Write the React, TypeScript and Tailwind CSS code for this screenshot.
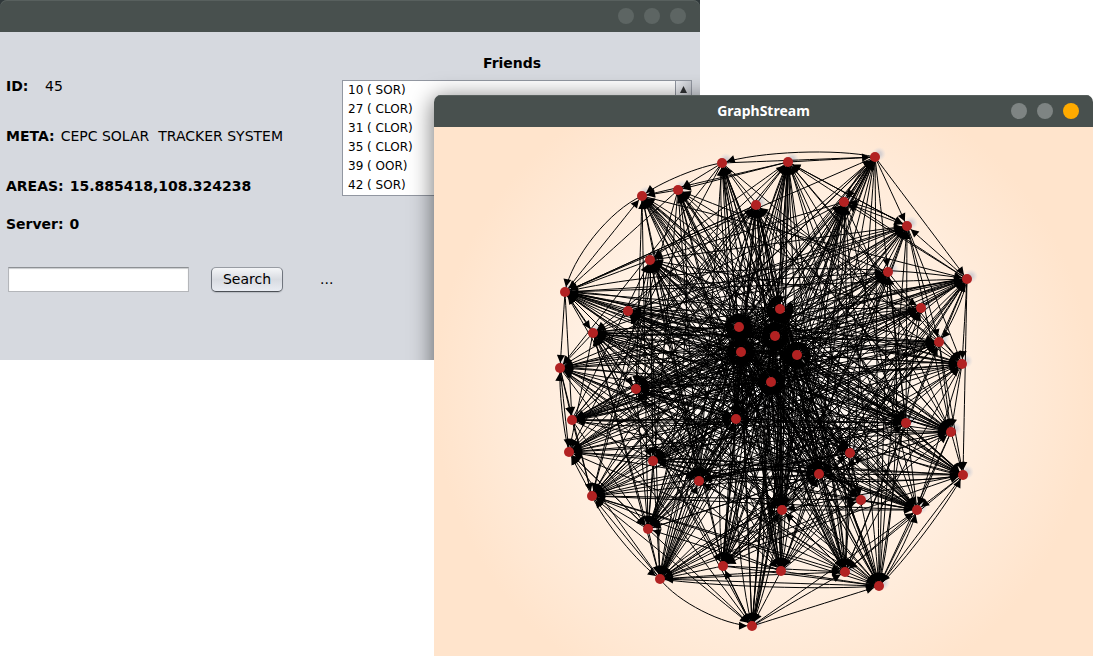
import React from "react";

type Point = [number, number];

const HUBS: Point[] = [
  [780, 309], [739, 327], [775, 336], [741, 352], [797, 355], [771, 382],
];

// x, y, share of links this node keeps
const OUTER: [number, number, number][] = [
  [722, 163, 0.7], [788, 162, 0.75], [875, 157, 0.7], [678, 190, 0.5], [642, 196, 0.6],
  [756, 205, 0.75], [844, 202, 0.6], [907, 226, 0.6], [650, 260, 0.7], [888, 272, 0.7],
  [967, 279, 0.6], [565, 292, 0.6], [628, 311, 0.5], [593, 333, 0.7], [921, 308, 0.5],
  [939, 342, 0.55], [962, 364, 0.6], [560, 368, 0.65], [636, 389, 0.75], [572, 420, 0.55],
  [736, 419, 0.85], [569, 452, 0.55], [906, 423, 0.75], [951, 432, 0.65], [850, 453, 0.5],
  [653, 461, 0.65], [699, 481, 0.85], [819, 474, 0.85], [963, 475, 0.5], [592, 496, 0.65],
  [861, 500, 0.5], [782, 510, 0.85], [917, 510, 0.7], [648, 529, 0.65], [660, 579, 0.85],
  [723, 566, 0.75], [781, 571, 0.75], [845, 572, 0.65], [879, 586, 0.75], [752, 626, 0.35],
];

const NODES: Point[] = [...OUTER.map(([x, y]): Point => [x, y]), ...HUBS];
const CENTER: Point = [765, 380];

// Links along the rim: from, to, outward bend
const RIM: [number, number, number][] = [
  [2, 10, 0], [4, 11, 0.1], [11, 4, 0], [10, 28, 0], [2, 0, 0.05], [0, 3, 0], [1, 3, 0],
  [1, 4, 0], [0, 2, 0], [1, 2, 0], [0, 4, 0.05], [8, 11, 0], [3, 11, 0], [5, 11, 0],
  [1, 7, 0], [10, 7, 0], [2, 7, 0], [10, 6, 0], [6, 7, 0], [7, 6, 0.05], [3, 4, 0],
  [7, 1, 0], [10, 1, 0], [2, 9, 0], [2, 6, 0], [6, 2, 0.06], [9, 7, 0], [14, 10, 0],
  [15, 10, 0], [10, 15, 0.05], [7, 15, 0], [7, 16, 0], [9, 16, 0], [7, 23, 0],
  [11, 17, 0], [11, 19, 0], [17, 21, 0], [21, 17, 0.03], [29, 21, 0], [19, 29, 0],
  [11, 13, 0], [13, 17, 0], [12, 11, 0], [13, 21, 0], [17, 29, 0], [17, 19, 0],
  [34, 29, 0], [29, 34, 0.05], [34, 21, 0], [34, 39, 0.09], [39, 35, 0], [29, 39, 0],
  [33, 29, 0], [33, 34, 0], [25, 34, 0], [33, 21, 0], [19, 33, 0], [21, 33, 0],
  [39, 38, 0], [38, 28, 0.03], [28, 38, 0], [32, 38, 0], [28, 32, 0], [38, 34, 0],
  [39, 32, 0], [39, 37, 0], [15, 28, 0], [23, 28, 0], [16, 23, 0], [10, 16, 0],
  [36, 39, 0], [33, 39, 0], [34, 37, 0], [34, 38, 0.02], [35, 37, 0], [35, 38, 0],
  [36, 38, 0], [32, 37, 0], [38, 32, 0.04], [28, 37, 0], [23, 38, 0], [22, 28, 0],
  [30, 32, 0], [16, 32, 0], [23, 32, 0], [15, 23, 0], [36, 34, 0], [35, 34, 0],
];

function noise(a: number, b: number): number {
  const v = Math.sin(a * 127.1 + b * 311.7 + 17.3) * 43758.5453;
  return v - Math.floor(v);
}

const lines: string[] = [];
const heads: string[] = [];

function link(from: number, to: number, bend: number) {
  const [ax, ay] = NODES[from];
  const [bx, by] = NODES[to];
  const dx = bx - ax;
  const dy = by - ay;
  const len = Math.hypot(dx, dy);
  let nx = -dy / len;
  let ny = dx / len;
  const mx = (ax + bx) / 2;
  const my = (ay + by) / 2;
  if (nx * (mx - CENTER[0]) + ny * (my - CENTER[1]) < 0) {
    nx = -nx;
    ny = -ny;
  }
  const off = len * bend * 1.33;
  const c1 = [ax + dx * 0.25 + nx * off, ay + dy * 0.25 + ny * off];
  const c2 = [ax + dx * 0.75 + nx * off, ay + dy * 0.75 + ny * off];
  const tx = bx - c2[0];
  const ty = by - c2[1];
  const tl = Math.hypot(tx, ty);
  const ux = tx / tl;
  const uy = ty / tl;
  const tip = [bx - ux * 5, by - uy * 5];
  const base = [bx - ux * 13, by - uy * 13];
  lines.push(
    `M${ax} ${ay}C${c1[0].toFixed(1)} ${c1[1].toFixed(1)} ${c2[0].toFixed(1)} ${c2[1].toFixed(1)} ${bx} ${by}`
  );
  heads.push(
    `M${tip[0].toFixed(1)} ${tip[1].toFixed(1)}L${(base[0] - uy * 4).toFixed(1)} ${(base[1] + ux * 4).toFixed(1)}L${(base[0] + uy * 4).toFixed(1)} ${(base[1] - ux * 4).toFixed(1)}Z`
  );
}

RIM.forEach(([a, b, bend]) => link(a, b, bend));

for (let i = 0; i < NODES.length; i++) {
  for (let j = i + 1; j < NODES.length; j++) {
    const hub = j >= OUTER.length;
    if (!hub) {
      const [ax, ay, wa] = OUTER[i];
      const [bx, by, wb] = OUTER[j];
      // Chords close to the rim are listed in RIM
      const mid = Math.hypot((ax + bx) / 2 - CENTER[0], ((ay + by) / 2 - CENTER[1]) * 0.88);
      if (mid > 160) continue;
      if (noise(i, j) > wa * wb * 1.1) continue;
    }
    const kind = noise(j, i);
    const bend = noise(i + 50, j) > 0.5 ? -0.06 : 0.04;
    const forward = hub ? kind < 0.65 : kind < 0.6;
    const back = hub ? kind > 0.25 : kind > 0.45;
    if (forward) link(i, j, 0);
    if (back) link(j, i, forward ? bend : 0);
  }
}

const LINE_PATH = lines.join("");
const HEAD_PATH = heads.join("");

function Graph() {
  return (
    <svg viewBox="434 127 659 529" className="block h-full w-full" role="img" aria-label="GraphStream">
      <defs>
        <radialGradient id="node-shadow">
          <stop offset="0.3" stopColor="#c4c4cc" stopOpacity="0.7" />
          <stop offset="1" stopColor="#d8d8e0" stopOpacity="0" />
        </radialGradient>
      </defs>
      {NODES.map(([x, y]) => (
        <circle key={`s${x}-${y}`} cx={x + 4} cy={y - 3} r="7" fill="url(#node-shadow)" />
      ))}
      <path d={LINE_PATH} fill="none" stroke="#000" strokeWidth="1" />
      <path d={HEAD_PATH} fill="#000" />
      {NODES.map(([x, y]) => (
        <circle key={`n${x}-${y}`} cx={x} cy={y} r="5" fill="#b22222" />
      ))}
    </svg>
  );
}

const FRIENDS = ["10 ( SOR)", "27 ( CLOR)", "31 ( CLOR)", "35 ( CLOR)", "39 ( OOR)", "42 ( SOR)"];

function Controls({ colors }: { colors: string[] }) {
  return (
    <div className="flex gap-[10px]">
      {["Minimize", "Maximize", "Close"].map((name, i) => (
        <button key={name} type="button" aria-label={name} className={`size-4 rounded-full ${colors[i]}`} />
      ))}
    </div>
  );
}

function DeviceWindow() {
  return (
    <section className="relative w-[700px] max-w-full overflow-hidden bg-[#d6d9df] text-sm leading-5 text-black">
      <div className="bg-[#30383a]">
        <header className="flex h-8 items-center justify-end rounded-t-[7px] bg-[#48504e] pr-[14px] shadow-[inset_0_1px_0_#58605e]">
          <Controls colors={["bg-[#5d6563]", "bg-[#5d6563]", "bg-[#5d6563]"]} />
        </header>
      </div>
      <div className="flex pb-[68px]">
        <div className="w-[342px] shrink-0 pl-[6px] pt-11">
          <dl>
            <div className="flex">
              <dt className="w-[39px] font-bold">ID:</dt>
              <dd>45</dd>
            </div>
            <div className="mt-[30px] flex gap-[6px]">
              <dt className="font-bold">META:</dt>
              <dd className="whitespace-pre">CEPC SOLAR  TRACKER SYSTEM</dd>
            </div>
            <div className="mt-[30px] flex gap-[6px] font-bold">
              <dt>AREAS:</dt>
              <dd>15.885418,108.324238</dd>
            </div>
            <div className="mt-[18px] flex gap-[6px] font-bold">
              <dt>Server:</dt>
              <dd>0</dd>
            </div>
          </dl>
          <form className="ml-[2px] mt-[33px] flex items-center" onSubmit={(e) => e.preventDefault()}>
            <input
              type="text"
              aria-label="Search"
              className="h-[25px] w-[181px] border border-[#b4b6ba] border-t-[#8d9094] bg-white px-1 shadow-[inset_0_1px_1px_#c9cbce] outline-none"
            />
            <button
              type="submit"
              className="ml-[22px] h-[25px] w-[72px] rounded-[5px] border border-[#70757e] border-b-[#4c5056] border-t-[#989ca3] bg-linear-to-b from-[#f5f6f8] via-[#d8dbe1] to-[#e9ecf2] pb-[2px] leading-none shadow-[0_1px_1px_#b9bcc2]"
            >
              Search
            </button>
            <span className="ml-[37px] pb-[2px]">...</span>
          </form>
        </div>
        <div className="min-w-0 flex-1 pr-2 pt-[21px]">
          <label htmlFor="friends" className="block pl-[141px] font-bold">
            Friends
          </label>
          <div className="mt-[7px] flex border border-[#9297a1] bg-white">
            <select
              id="friends"
              size={6}
              className="h-[114px] min-w-0 flex-1 overflow-hidden bg-white pl-[3px] text-xs outline-none"
            >
              {FRIENDS.map((name) => (
                <option key={name} className="h-[19px] px-[2px] pb-0 pt-[2px]">
                  {name}
                </option>
              ))}
            </select>
            <div className="w-4 border-l border-[#9297a1] bg-[#d0d3d9]">
              <button
                type="button"
                aria-label="Scroll up"
                className="flex h-[17px] w-full items-center justify-center bg-linear-to-r from-[#eceef2] to-[#c9ccd2]"
              >
                <svg viewBox="0 0 7 7" className="size-[7px]" aria-hidden="true">
                  <path d="M3.5 0L7 7H0Z" fill="#303234" />
                </svg>
              </button>
            </div>
          </div>
        </div>
      </div>
      <div
        aria-hidden="true"
        className="absolute left-[434px] top-[95px] h-[560px] w-[660px] rounded-t-lg shadow-[0_4px_22px_2px_rgba(0,0,0,0.5)]"
      />
    </section>
  );
}

function GraphWindow() {
  return (
    <section className="absolute bottom-0 left-[434px] right-0 top-[95px] flex flex-col overflow-hidden rounded-t-[7px]">
      <header className="grid h-8 shrink-0 grid-cols-[1fr_auto_1fr] items-center bg-[#48504e] pr-[14px] shadow-[inset_0_1px_0_#58605e]">
        <span />
        <h1 className="pl-[14px] font-['Noto_Sans',sans-serif] text-sm font-bold text-white">GraphStream</h1>
        <div className="flex justify-end">
          <Controls colors={["bg-[#7e8483]", "bg-[#7e8483]", "bg-[#ffaa00]"]} />
        </div>
      </header>
      <div className="min-h-0 flex-1 bg-[radial-gradient(circle_at_center,#ffffff_0px,#ffe4cc_330px)]">
        <Graph />
      </div>
    </section>
  );
}

export default function App() {
  return (
    <main className="relative min-h-screen overflow-hidden bg-white font-['DejaVu_Sans',sans-serif]">
      <DeviceWindow />
      <GraphWindow />
    </main>
  );
}
